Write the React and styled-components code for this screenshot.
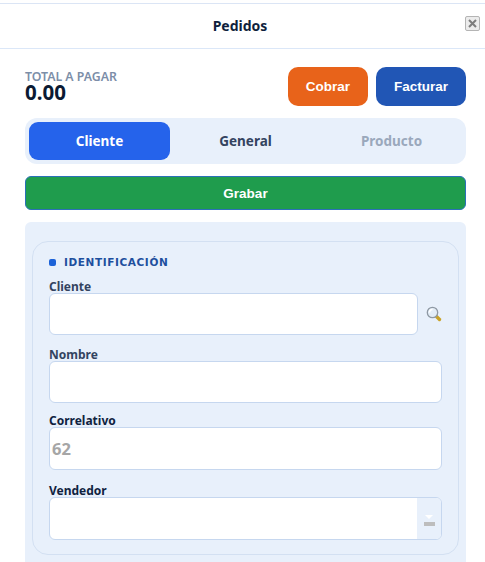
import React from 'react';
import styled, { createGlobalStyle } from 'styled-components';

const GlobalStyle = createGlobalStyle`
  html, body {
    margin: 0;
    padding: 0;
    height: 100%;
    overflow: hidden;
    background: #fff;
  }
`;

const Page = styled.div`
  width: 485px;
  height: 562px;
  overflow: hidden;
  box-sizing: border-box;
  padding-top: 3px;
  background: #fff;
  font-family: 'Noto Sans', sans-serif;
  color: #0f2240;
`;

const Header = styled.header`
  position: relative;
  height: 46px;
  box-sizing: border-box;
  display: flex;
  align-items: center;
  justify-content: center;
  padding: 0 5px 2px 0;
  border-top: 1px solid #dbe5f5;
  border-bottom: 1px solid #dbe7f8;
`;

const Title = styled.h1`
  margin: 0;
  font-size: 14px;
  font-weight: 700;
  color: #0f1f3d;
`;

const CloseBox = styled.span`
  position: absolute;
  top: 12px;
  right: 5px;
  width: 15px;
  height: 15px;
  box-sizing: border-box;
  display: flex;
  align-items: center;
  justify-content: center;
  border: 1px solid #b4b4b4;
  border-radius: 2px;
  background: #ececec;
`;

const Content = styled.main`
  padding: 18px 19px 0 25px;
  display: flex;
  flex-direction: column;
`;

const TotalRow = styled.section`
  display: flex;
  justify-content: space-between;
  align-items: flex-start;
  height: 39px;
`;

const TotalBlock = styled.div`
  display: flex;
  flex-direction: column;
  padding-top: 4px;
`;

const TotalLabel = styled.span`
  font-size: 12.3px;
  line-height: 12px;
  font-weight: 600;
  color: #7c8ea8;
`;

const TotalValue = styled.span`
  font-size: 20.5px;
  line-height: 18px;
  font-weight: 700;
  color: #0b1a33;
`;

const Actions = styled.div`
  display: flex;
  gap: 8px;
`;

const ActionButton = styled.button`
  width: ${({ $w }) => $w}px;
  height: 39px;
  border: none;
  border-radius: 10px;
  background: ${({ $bg }) => $bg};
  color: #fff;
  font-family: 'Liberation Sans', Arial, sans-serif;
  font-size: 13.5px;
  font-weight: 700;
  padding: 0;
`;

const Tabs = styled.nav`
  margin-top: 12px;
  height: 46px;
  box-sizing: border-box;
  padding: 4px;
  display: grid;
  grid-template-columns: repeat(3, 1fr);
  gap: 5px;
  border-radius: 12px;
  background: #e8f0fb;
`;

const Tab = styled.div`
  display: flex;
  align-items: center;
  justify-content: center;
  border-radius: 9px;
  font-size: 13.5px;
  font-weight: 700;
  background: ${({ $active }) => ($active ? '#2563eb' : 'transparent')};
  color: ${({ $active, $muted }) => ($active ? '#fff' : $muted ? '#9aa8bc' : '#33435f')};
`;

const SaveButton = styled.button`
  margin-top: 12px;
  height: 34px;
  border: 1px solid #2a70b8;
  border-radius: 6px;
  background: #1f9c4d;
  color: #fff;
  font-family: 'Liberation Sans', Arial, sans-serif;
  font-size: 13.5px;
  font-weight: 700;
  padding: 0;
`;

const Panel = styled.section`
  margin-top: 12px;
  height: 340px;
  box-sizing: border-box;
  padding: 19px 7px 0;
  border-radius: 6px 6px 0 0;
  background: #e8f0fb;
`;

const Card = styled.div`
  height: 314px;
  box-sizing: border-box;
  padding: 12px 16px 0;
  border: 1px solid #d3e0f2;
  border-radius: 16px;
`;

const SectionTitle = styled.div`
  display: flex;
  align-items: center;
  gap: 8px;
  height: 16px;
  font-family: 'DejaVu Sans', sans-serif;
  font-size: 10.5px;
  font-weight: 700;
  letter-spacing: 0.6px;
  color: #1e4f9e;
`;

const Dot = styled.span`
  width: 7px;
  height: 7px;
  border-radius: 2px;
  background: #1d63d8;
`;

const Field = styled.div`
  margin-top: ${({ $gap }) => $gap}px;
  display: flex;
  flex-direction: column;
`;

const Label = styled.label`
  font-size: 12px;
  line-height: 13px;
  font-weight: 700;
  color: ${({ $soft }) => ($soft ? '#33435f' : '#0f2240')};
`;

const InputRow = styled.div`
  display: flex;
  align-items: center;
  gap: 8px;
`;

const InputBox = styled.div`
  flex: 1 0 auto;
  height: ${({ $h }) => $h}px;
  box-sizing: border-box;
  display: flex;
  align-items: center;
  justify-content: space-between;
  overflow: hidden;
  padding-left: 2px;
  border: 1px solid #c6d7ef;
  border-radius: 6px;
  background: #fff;
  font-size: 16.5px;
  font-weight: 700;
  color: #a6a6a6;
`;

const SelectArrow = styled.span`
  width: 24px;
  height: 100%;
  display: flex;
  flex-direction: column;
  align-items: center;
  justify-content: center;
  gap: 3px;
  padding-top: 4px;
  box-sizing: border-box;
  background: #e8f0fb;
`;

const ArrowTip = styled.span`
  width: 0;
  height: 0;
  border-left: 4px solid transparent;
  border-right: 4px solid transparent;
  border-top: 4px solid #fff;
`;

const ArrowBar = styled.span`
  width: 11px;
  height: 4px;
  background: #bdbdbd;
`;

const SearchIcon = () => (
  <svg width="16" height="16" viewBox="0 0 16 16" style={{ flexShrink: 0 }}>
    <path d="M10.5 10.5l3 3" stroke="#c9a227" strokeWidth="3.4" strokeLinecap="round" />
    <circle cx="6.5" cy="6.5" r="5.2" fill="#e3edf7" stroke="#8f99a4" strokeWidth="1.3" />
    <path d="M3.5 6.5a3 3 0 0 1 3-3" fill="none" stroke="#fff" strokeWidth="1.6" />
  </svg>
);

const CloseIcon = () => (
  <svg width="9" height="9" viewBox="0 0 9 9">
    <path d="M1 1l7 7M8 1l-7 7" stroke="#7d7d7d" strokeWidth="2" />
  </svg>
);

export default function App() {
  return (
    <Page>
      <GlobalStyle />
      <Header>
        <Title>Pedidos</Title>
        <CloseBox>
          <CloseIcon />
        </CloseBox>
      </Header>
      <Content>
        <TotalRow>
          <TotalBlock>
            <TotalLabel>TOTAL A PAGAR</TotalLabel>
            <TotalValue>0.00</TotalValue>
          </TotalBlock>
          <Actions>
            <ActionButton $w={80} $bg="#e8631a">Cobrar</ActionButton>
            <ActionButton $w={90} $bg="#2156b5">Facturar</ActionButton>
          </Actions>
        </TotalRow>
        <Tabs>
          <Tab $active>Cliente</Tab>
          <Tab>General</Tab>
          <Tab $muted>Producto</Tab>
        </Tabs>
        <SaveButton>Grabar</SaveButton>
        <Panel>
          <Card>
            <SectionTitle>
              <Dot />
              IDENTIFICACIÓN
            </SectionTitle>
            <Field $gap={10}>
              <Label $soft>Cliente</Label>
              <InputRow>
                <InputBox $h={42} />
                <SearchIcon />
              </InputRow>
            </Field>
            <Field $gap={13}>
              <Label $soft>Nombre</Label>
              <InputBox $h={42} />
            </Field>
            <Field $gap={11}>
              <Label>Correlativo</Label>
              <InputBox $h={43}>62</InputBox>
            </Field>
            <Field $gap={14}>
              <Label>Vendedor</Label>
              <InputBox $h={43}>
                <span />
                <SelectArrow>
                  <ArrowTip />
                  <ArrowBar />
                </SelectArrow>
              </InputBox>
            </Field>
          </Card>
        </Panel>
      </Content>
    </Page>
  );
}
